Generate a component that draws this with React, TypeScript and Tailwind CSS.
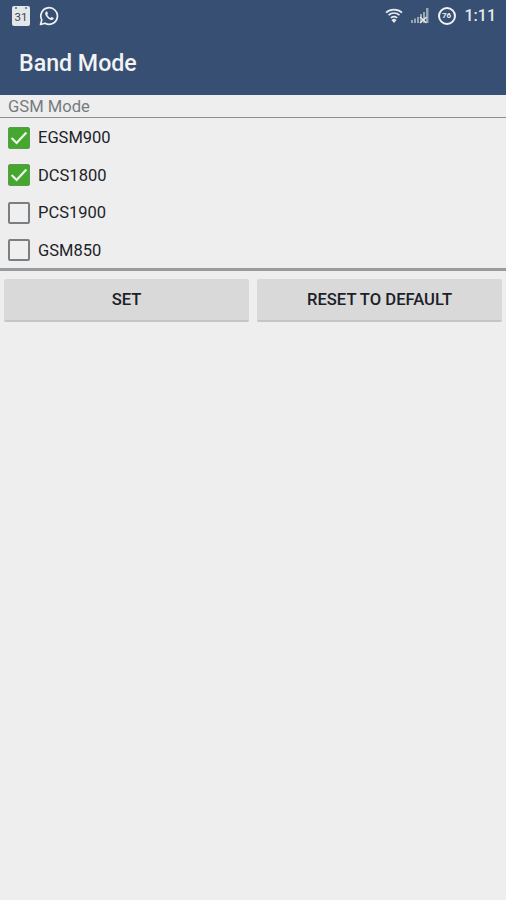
import React from "react";

const font = { fontFamily: "Roboto, sans-serif" };

function CheckRow({ label, checked }: { label: string; checked: boolean }) {
  return (
    <div className="flex items-center h-[37.5px] pl-[8px]">
      {checked ? (
        <div className="w-[22px] h-[22px] rounded-[2px] bg-[#45a82e] border border-[#5c9a50] flex items-center justify-center">
          <svg width="20" height="20" viewBox="0 0 20 20" fill="none">
            <path d="M2.6 10 L7.6 15 L17.4 4.6" stroke="#f2f5f0" strokeWidth="2.2" />
          </svg>
        </div>
      ) : (
        <div className="w-[22px] h-[22px] rounded-[2px] border-[2px] border-[#7b7f82] bg-[#efefef]" />
      )}
      <span className="ml-[8px] text-[16.5px] text-[#1d2329] leading-none relative top-[0.5px]">{label}</span>
    </div>
  );
}

function Btn({ label }: { label: string }) {
  return (
    <button className="flex-1 h-[43px] pt-[2px] rounded-[2px] bg-[#d8d9d8] border-b-2 border-[#c4c5c4] text-[16.6px] font-medium text-[#1b2129] flex items-center justify-center">
      {label}
    </button>
  );
}

export default function App() {
  return (
    <div className="w-[506px] h-[900px] bg-[#eeeeee] flex flex-col overflow-hidden" style={font}>
      <div className="h-[95px] bg-[#364f72] shrink-0 flex flex-col">
        <div className="h-[31px] flex items-center pl-[12px] pr-[10px]">
          <div className="relative w-[18px] h-[20px] rounded-[2px] bg-[#e4e7e9] flex items-center justify-center text-[#3a4450] text-[11.5px] leading-none pt-[4px]">
            <span className="absolute top-[1px] left-[3px] w-[2px] h-[2px] bg-[#7d8894]" />
            <span className="absolute top-[1px] right-[3px] w-[2px] h-[2px] bg-[#7d8894]" />
            31
          </div>
          <svg className="ml-[9px]" width="20" height="20" viewBox="0 0 20 20" fill="none">
            <path d="M1.5 18.5 L2.8 13.9 A8.3 8.3 0 1 1 6 17.2 Z" stroke="#f0f2f3" strokeWidth="1.7" strokeLinejoin="round" />
            <path d="M7.2 5.6 C6 6.4 5.8 8 6.9 9.8 C8.1 11.9 10.6 14 12.7 14.1 C14 14.1 14.9 13 14.8 12.1 L12.6 11 L11.6 12 C10.2 11.5 8.9 10.2 8.2 8.8 L9 7.7 L8.2 5.6 Z" fill="#f0f2f3" />
          </svg>
          <div className="ml-auto flex items-center">
            <svg width="18" height="15" viewBox="0 0 18 15" fill="none" stroke="#e8ebed" strokeWidth="1.7">
              <path d="M1 4.6 C5.5 0.6 12.5 0.6 17 4.6" />
              <path d="M3.5 7.2 C6.8 4.4 11.2 4.4 14.5 7.2" />
              <path d="M5.9 9.8 C7.9 8.2 10.1 8.2 12.1 9.8" />
              <path d="M7.7 12.1 L9 13.6 L10.3 12.1 C9.5 11.5 8.5 11.5 7.7 12.1 Z" fill="#e8ebed" />
            </svg>
            <svg className="ml-[8px]" width="20" height="17" viewBox="0 0 20 17" fill="#98a5b4">
              <rect x="0" y="13" width="2" height="3" />
              <rect x="3" y="11.5" width="2" height="4.5" />
              <rect x="6" y="10" width="2" height="6" />
              <rect x="9" y="7" width="2" height="9" />
              <rect x="12" y="5" width="2" height="11" />
              <rect x="15" y="1" width="2.5" height="15" />
              <path d="M9 10 L15.5 16 M15.5 10 L9 16" stroke="#e8ebed" strokeWidth="1.4" />
            </svg>
            <div className="ml-[7px] w-[18px] h-[18px] rounded-full border-[2.5px] border-[#f0f2f3] bg-[#364f72] flex items-center justify-center text-[8px] font-bold text-[#f0f2f3] leading-none">
              76
            </div>
            <span className="ml-[9px] text-[16px] font-medium text-[#e6e9ec] leading-none">1:11</span>
          </div>
        </div>
        <div className="flex-1 flex items-center pl-[19px] pt-[2px]">
          <span className="text-[23.2px] font-medium text-[#f2f3f4] leading-none">Band Mode</span>
        </div>
      </div>

      <div className="h-[23px] shrink-0 border-b border-[#8b8f91] pl-[8px] pt-[3px] flex items-center text-[16.6px] text-[#777b7e] leading-none">
        GSM Mode
      </div>

      <div className="shrink-0 pt-[1px]">
        <CheckRow label="EGSM900" checked />
        <CheckRow label="DCS1800" checked />
        <CheckRow label="PCS1900" checked={false} />
        <CheckRow label="GSM850" checked={false} />
      </div>

      <div className="h-[3px] shrink-0 -mt-[1px] bg-[#999c9e]" />

      <div className="flex gap-[8px] px-[4px] pt-[8px]">
        <Btn label="SET" />
        <Btn label="RESET TO DEFAULT" />
      </div>
    </div>
  );
}
